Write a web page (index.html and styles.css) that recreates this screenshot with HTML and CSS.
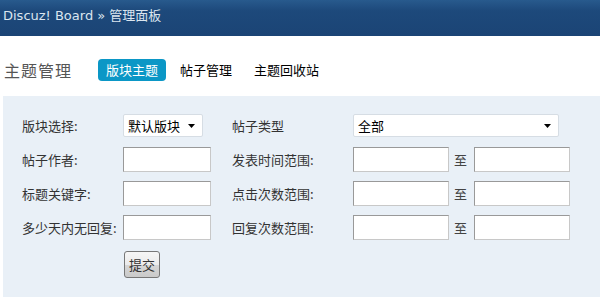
FILE: index.html
```html
<!DOCTYPE html>
<html>
<head>
    <meta charset="utf-8">
    <link rel="stylesheet" href="styles.css">
</head>
<body>
    <div class="topbar">Discuz! Board &raquo; 管理面板</div>
    <div class="titlebar">
        <h2 class="page-title">主题管理</h2>
        <a class="tab active" href="#">版块主题</a>
        <a class="tab" href="#">帖子管理</a>
        <a class="tab" href="#">主题回收站</a>
    </div>
    <form class="search-panel">
        <div class="label">版块选择:</div>
        <div>
            <span class="select-wrap small">
                <select class="select"><option>默认版块</option></select>
                <svg class="arrow" width="7" height="4" viewBox="0 0 7 4"><path d="M0 0h7L3.5 4z" fill="#000"/></svg>
            </span>
        </div>
        <div class="label">帖子类型</div>
        <div>
            <span class="select-wrap wide">
                <select class="select"><option>全部</option></select>
                <svg class="arrow" width="7" height="4" viewBox="0 0 7 4"><path d="M0 0h7L3.5 4z" fill="#000"/></svg>
            </span>
        </div>

        <div class="label">帖子作者:</div>
        <div><input class="text-input short" type="text"></div>
        <div class="label">发表时间范围:</div>
        <div class="range"><input class="text-input" type="text"><span>至</span><input class="text-input" type="text"></div>

        <div class="label">标题关键字:</div>
        <div><input class="text-input short" type="text"></div>
        <div class="label">点击次数范围:</div>
        <div class="range"><input class="text-input" type="text"><span>至</span><input class="text-input" type="text"></div>

        <div class="label">多少天内无回复:</div>
        <div><input class="text-input short" type="text"></div>
        <div class="label">回复次数范围:</div>
        <div class="range"><input class="text-input" type="text"><span>至</span><input class="text-input" type="text"></div>

        <div></div>
        <div class="submit-cell"><button class="submit-btn" type="button">提交</button></div>
    </form>
</body>
</html>
```

FILE: styles.css
```css
body {
    margin: 0;
    font-family: "DejaVu Sans", "Noto Sans CJK SC", sans-serif;
    font-size: 12px;
    color: #333;
    background-color: #fff;
    overflow: hidden;
}
.topbar {
    height: 36px;
    line-height: 32px;
    padding-left: 3px;
    font-size: 13px;
    color: #dbe5ef;
    background: linear-gradient(#285a8d, #1d497b 30%, #1b4475);
}
.titlebar {
    display: flex;
    align-items: center;
    height: 22px;
    margin-top: 23px;
    padding-left: 4px;
}
.page-title {
    margin: 0 26px 0 0;
    font-family: "Noto Sans CJK SC", sans-serif;
    font-size: 16px;
    font-weight: normal;
    letter-spacing: 1px;
    color: #555;
}
.tab {
    display: block;
    height: 22px;
    line-height: 22px;
    padding: 0 8px;
    margin-right: 6px;
    font-family: "Noto Sans CJK SC", sans-serif;
    font-size: 13px;
    color: #000;
    text-decoration: none;
    border-radius: 4px;
}
.tab.active {
    color: #fff;
    background-color: #0b97c6;
}
.search-panel {
    display: grid;
    grid-template-columns: 101px 109px 121px 1fr;
    grid-auto-rows: 34px;
    align-items: center;
    margin: 15px 0 0 3px;
    padding: 12px 0 0 19px;
    height: 189px;
    background-color: #e9f0f7;
    font-family: "Noto Sans CJK SC", sans-serif;
}
.label {
    font-size: 13px;
    color: #333;
    white-space: nowrap;
}
.select-wrap {
    position: relative;
    display: inline-block;
    height: 23px;
}
.select-wrap.small {
    width: 80px;
}
.select-wrap.wide {
    width: 206px;
}
.select {
    appearance: none;
    -webkit-appearance: none;
    box-sizing: border-box;
    width: 100%;
    height: 23px;
    margin: 0;
    padding: 0 0 0 4px;
    border: 1px solid #d6dde4;
    border-radius: 2px;
    background-color: #fff;
    font-family: "Noto Sans CJK SC", sans-serif;
    font-size: 13px;
    color: #000;
}
.arrow {
    position: absolute;
    right: 8px;
    top: 10px;
}
.text-input {
    box-sizing: border-box;
    width: 96px;
    height: 25px;
    margin: 0;
    border: 1px solid #c8c8c8;
    border-top-color: #999;
    border-left-color: #999;
    background-color: #fff;
}
.text-input.short {
    width: 88px;
}
.range {
    display: flex;
    align-items: center;
}
.range span {
    width: 13px;
    margin: 0 7px 0 5px;
    font-size: 13px;
    color: #444;
}
.submit-cell {
    align-self: end;
}
.submit-btn {
    box-sizing: border-box;
    width: 36px;
    height: 27px;
    margin-left: 1px;
    padding: 0;
    border: 1px solid #777;
    border-radius: 3px;
    background: linear-gradient(#f6f6f6, #ebebeb 50%, #d6d6d6 52%, #cacaca);
    font-family: "Noto Sans CJK SC", sans-serif;
    font-size: 13px;
    color: #333;
}
```
